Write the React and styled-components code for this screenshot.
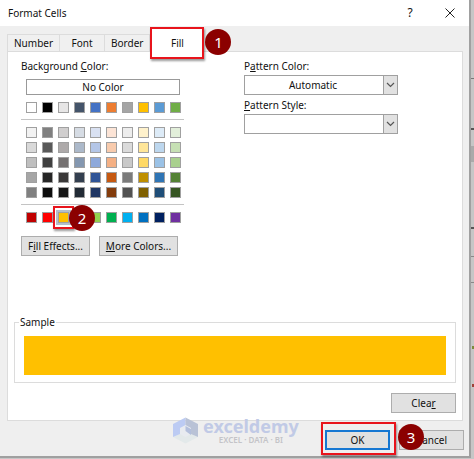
import React, { useState } from 'react'
import styled, { createGlobalStyle, css } from 'styled-components'

const GlobalStyle = createGlobalStyle`
  * { box-sizing: border-box; }
  body {
    margin: 0;
    background: #c6c6c6;
    color: #111;
    font: 400 10px/14px 'Noto Sans', 'Open Sans', sans-serif;
  }
  button, select {
    font: inherit;
    color: inherit;
  }
`

const Desktop = styled.div`
  min-height: 100vh;
  padding: 0 3px 2px 0;
  background:
    linear-gradient(#777, #777) right 78px / 3px 1px no-repeat,
    linear-gradient(#555, #555) right 128px / 3px 2px no-repeat,
    linear-gradient(#aaa, #aaa) right 146px / 3px 16px no-repeat,
    linear-gradient(#555, #555) right 227px / 3px 2px no-repeat,
    linear-gradient(#888, #888) right 256px / 3px 1px no-repeat,
    linear-gradient(#888, #888) right 282px / 3px 1px no-repeat,
    linear-gradient(#7d8a3c, #7d8a3c) right 346px / 2px 3px no-repeat,
    linear-gradient(#a04038, #a04038) right 384px / 2px 3px no-repeat,
    #c6c6c6;
`

const Dialog = styled.div`
  background: #efefef;
  border-right: 2px solid #a0a0a0;
  border-bottom: 2px solid #a0a0a0;
`

const TitleBar = styled.header`
  display: flex;
  align-items: center;
  height: 26px;
  padding: 0 9px 0 8px;
  background: #fff;
`

const Title = styled.h1`
  flex: 1;
  margin: 0;
  font-size: 10px;
  font-weight: 400;
`

const TitleButton = styled.button`
  display: grid;
  place-items: center;
  width: 20px;
  height: 20px;
  margin-left: 20px;
  padding: 0;
  border: none;
  background: none;
  font-size: 12px;
`

const Tabs = styled.div`
  display: flex;
  align-items: flex-end;
  height: 25px;
  padding: 0 7px;
`

const Tab = styled.button`
  height: 17px;
  min-width: 45px;
  padding: 0 6px;
  border: 1px solid #dcdcdc;
  border-width: 1px 1px 0 0;
  background: #f0f0f0;
  &:first-child { border-left-width: 1px; }
  ${p => p.$active && css`
    height: 32px;
    width: 54px;
    margin-bottom: -8px;
    border: none;
    background: #fff;
    &:first-child { border: none; }
  `}
`

const Marked = styled.div`
  position: relative;
  display: flex;
`

// red frame drawn round a control
const Highlight = styled.span`
  position: absolute;
  inset: ${p => p.$inset};
  border: 2px solid #e8141c;
  box-shadow: 1px 2px 2px rgba(0, 0, 0, .4);
  pointer-events: none;
`

const Step = styled.span`
  position: absolute;
  top: ${p => p.$top};
  left: ${p => p.$left};
  z-index: 1;
  display: grid;
  place-items: center;
  width: 26px;
  height: 26px;
  border-radius: 50%;
  background: #8b0000;
  color: #fff;
  font-size: 15px;
  pointer-events: none;
`

const Panel = styled.section`
  margin: 0 6px 0 7px;
  padding: 7px 6px;
  border: 1px solid #dcdcdc;
  background: #fff;
`

const Columns = styled.div`
  display: grid;
  grid-template-columns: 163px minmax(0, 154px);
  column-gap: 60px;
  padding: 0 7px;
`

const Colors = styled.div`
  hr {
    height: 1px;
    margin: 6px 0 7px;
    border: none;
    background: #c4c4c4;
  }
`

const Label = styled.label`
  display: block;
`

const NoColor = styled.button`
  display: block;
  width: 154px;
  height: 16px;
  margin: 6px 0 7px 5px;
  padding: 0;
  border: 1px solid #999;
  background: #fff;
  line-height: 12px;
`

const Palette = styled.div`
  display: grid;
  grid-template-columns: repeat(10, 11px);
  gap: 4px 5px;
  padding-left: 5px;
`

const Swatch = styled.button`
  display: block;
  width: 11px;
  height: 11px;
  padding: 0;
  border: 1px solid #a0a0a0;
  background: ${p => p.$color};
  ${p => p.$selected && css`
    outline: 2px solid #b4bfca;
  `}
`

const Actions = styled.div`
  display: flex;
  gap: 9px;
  width: max-content;
  margin-top: 13px;
`

const Button = styled.button`
  min-width: ${p => p.$width || '65px'};
  height: 20px;
  padding: 0 4px;
  border: 1px solid #adadad;
  background: #e1e1e1;
  line-height: 16px;
  white-space: nowrap;
  ${p => p.$primary && css`
    border: 2px solid #1677d2;
    line-height: 14px;
  `}
`

const SelectBox = styled.div`
  display: grid;
  grid-template-columns: 1fr 15px;
  height: 20px;
  margin: 2px 0 3px;
  select {
    grid-area: 1 / 1 / 2 / 3;
    width: 100%;
    padding: 0 16px 0 0;
    appearance: none;
    border: 1px solid #a0a0a0;
    border-radius: 0;
    background: #fff;
    text-align: center;
    text-align-last: center;
  }
`

const Arrow = styled.span`
  grid-area: 1 / 2;
  z-index: 1;
  display: grid;
  place-items: center;
  border: 1px solid #a0a0a0;
  background: #e1e1e1;
  pointer-events: none;
`

const Sample = styled.fieldset`
  margin: 59px 0 0;
  padding: 7px 9px;
  border: 1px solid #dcdcdc;
  legend {
    margin-left: -5px;
    padding: 0 1px;
  }
  div {
    height: 39px;
    background: ${p => p.$color};
  }
`

const ClearRow = styled.div`
  display: flex;
  justify-content: flex-end;
  margin-top: 10px;
`

const Footer = styled.footer`
  display: flex;
  align-items: flex-start;
  justify-content: flex-end;
  gap: 9px;
  height: 35px;
  padding: 9px 5px 0;
`

const Brand = styled.div`
  position: relative;
  display: flex;
  gap: 5px;
  margin: -13px auto 0 168px;
  color: #c1cae6;
`

const BrandName = styled.div`
  display: flex;
  flex-direction: column;
  align-items: center;
  strong {
    font-size: 18px;
    font-weight: 700;
    line-height: 18px;
  }
  small {
    color: #c4c4c8;
    font-size: 8px;
    font-weight: 600;
    line-height: 10px;
    white-space: nowrap;
  }
`

const mainColors = [
  '#ffffff', '#000000', '#e7e6e6', '#44546a', '#4472c4',
  '#ed7d31', '#a5a5a5', '#ffc000', '#5b9bd5', '#70ad47',
]

const shades = [
  '#f2f2f2', '#808080', '#d0cece', '#d6dce4', '#d9e1f2', '#fce4d6', '#ededed', '#fff2cc', '#ddebf7', '#e2efda',
  '#d9d9d9', '#595959', '#aeaaaa', '#acb9ca', '#b4c6e7', '#f8cbad', '#dbdbdb', '#ffe699', '#bdd7ee', '#c6e0b4',
  '#bfbfbf', '#404040', '#757171', '#8497b0', '#8ea9db', '#f4b084', '#c9c9c9', '#ffd966', '#9bc2e6', '#a9d08e',
  '#a6a6a6', '#262626', '#3a3838', '#333f4f', '#305496', '#c65911', '#7b7b7b', '#bf8f00', '#2f75b5', '#548235',
  '#808080', '#0d0d0d', '#161616', '#222b35', '#203764', '#833c0c', '#525252', '#806000', '#1f4e78', '#375623',
]

const standard = [
  '#c00000', '#ff0000', '#ffc000', '#ffff00', '#92d050',
  '#00b050', '#00b0f0', '#0070c0', '#002060', '#7030a0',
]

function Dropdown({ id, children }) {
  return (
    <SelectBox>
      <select id={id}>{children}</select>
      <Arrow>
        <svg width='9' height='6' viewBox='0 0 9 6' fill='none' stroke='#555' strokeWidth='1.2'>
          <path d='M1 1l3.5 3.5L8 1' />
        </svg>
      </Arrow>
    </SelectBox>
  )
}

function Logo() {
  return (
    <svg width='25' height='27' viewBox='0 0 25 27'>
      <path d='M12.5 14L25 20l-12.5 6.500L0 20z' fill='#e3e9ea' />
      <path d='M12.5 .5L0 7v13l7-3 5.500-4z' fill='#bccbf3' />
      <path d='M12.5 .5L25 7v13l-7-3-5.500-4z' fill='#b9c2d6' />
      <path d='M12.5 8L7 11v6l5.500 3 5.500-3v-6z' fill='#e8ebf0' />
      <path d='M12.5 9l5.500 3v6l-5.500-4z' fill='#b3bfdc' />
    </svg>
  )
}

export default function App() {
  const [fill, setFill] = useState('#ffc000')

  return (
    <>
      <GlobalStyle />
      <Desktop>
        <Dialog>
          <TitleBar>
            <Title>Format Cells</Title>
            <TitleButton>?</TitleButton>
            <TitleButton aria-label='Close'>
              <svg width='10' height='10' viewBox='0 0 10 10' stroke='#222'>
                <path d='M.5.5l9 9M9.500.5l-9 9' />
              </svg>
            </TitleButton>
          </TitleBar>

          <Tabs>
            <Tab>Number</Tab>
            <Tab>Font</Tab>
            <Tab>Border</Tab>
            <Marked>
              <Tab $active>Fill</Tab>
              <Highlight $inset='0 0 -8px 0' />
              <Step $top='2px' $left='55px'>1</Step>
            </Marked>
          </Tabs>

          <Panel>
            <Columns>
              <Colors>
                <Label as='div'>Background <u>C</u>olor:</Label>
                <NoColor onClick={() => setFill('#fff')}>No Color</NoColor>
                <Palette>
                  {mainColors.map(c => (
                    <Swatch key={c} $color={c} aria-label={c} onClick={() => setFill(c)} />
                  ))}
                </Palette>
                <hr />
                <Palette>
                  {shades.map((c, i) => (
                    <Swatch key={i} $color={c} aria-label={c} onClick={() => setFill(c)} />
                  ))}
                </Palette>
                <hr />
                <Palette>
                  {standard.map((c, i) => (
                    <Marked key={c}>
                      <Swatch $color={c} $selected={i === 2} aria-label={c} onClick={() => setFill(c)} />
                      {i === 2 && (
                        <>
                          <Highlight $inset='-6px -5px' />
                          <Step $top='-7px' $left='11px'>2</Step>
                        </>
                      )}
                    </Marked>
                  ))}
                </Palette>
                <Actions>
                  <Button $width='69px'>F<u>i</u>ll Effects...</Button>
                  <Button $width='79px'><u>M</u>ore Colors...</Button>
                </Actions>
              </Colors>

              <div>
                <Label htmlFor='pattern-color'>P<u>a</u>ttern Color:</Label>
                <Dropdown id='pattern-color'>
                  <option>Automatic</option>
                </Dropdown>
                <Label htmlFor='pattern-style'><u>P</u>attern Style:</Label>
                <Dropdown id='pattern-style'>
                  <option></option>
                </Dropdown>
              </div>
            </Columns>

            <Sample $color={fill}>
              <legend>Sample</legend>
              <div />
            </Sample>
            <ClearRow>
              <Button>Clea<u>r</u></Button>
            </ClearRow>
          </Panel>

          <Footer>
            <Brand>
              <Logo />
              <BrandName>
                <strong>exceldemy</strong>
                <small>EXCEL · DATA · BI</small>
              </BrandName>
            </Brand>
            <Marked>
              <Button $primary>OK</Button>
              <Highlight $inset='-8px -6px -5px -4px' />
            </Marked>
            <Marked>
              <Button>Cancel</Button>
              <Step $top='-6px' $left='-1px'>3</Step>
            </Marked>
          </Footer>
        </Dialog>
      </Desktop>
    </>
  )
}
